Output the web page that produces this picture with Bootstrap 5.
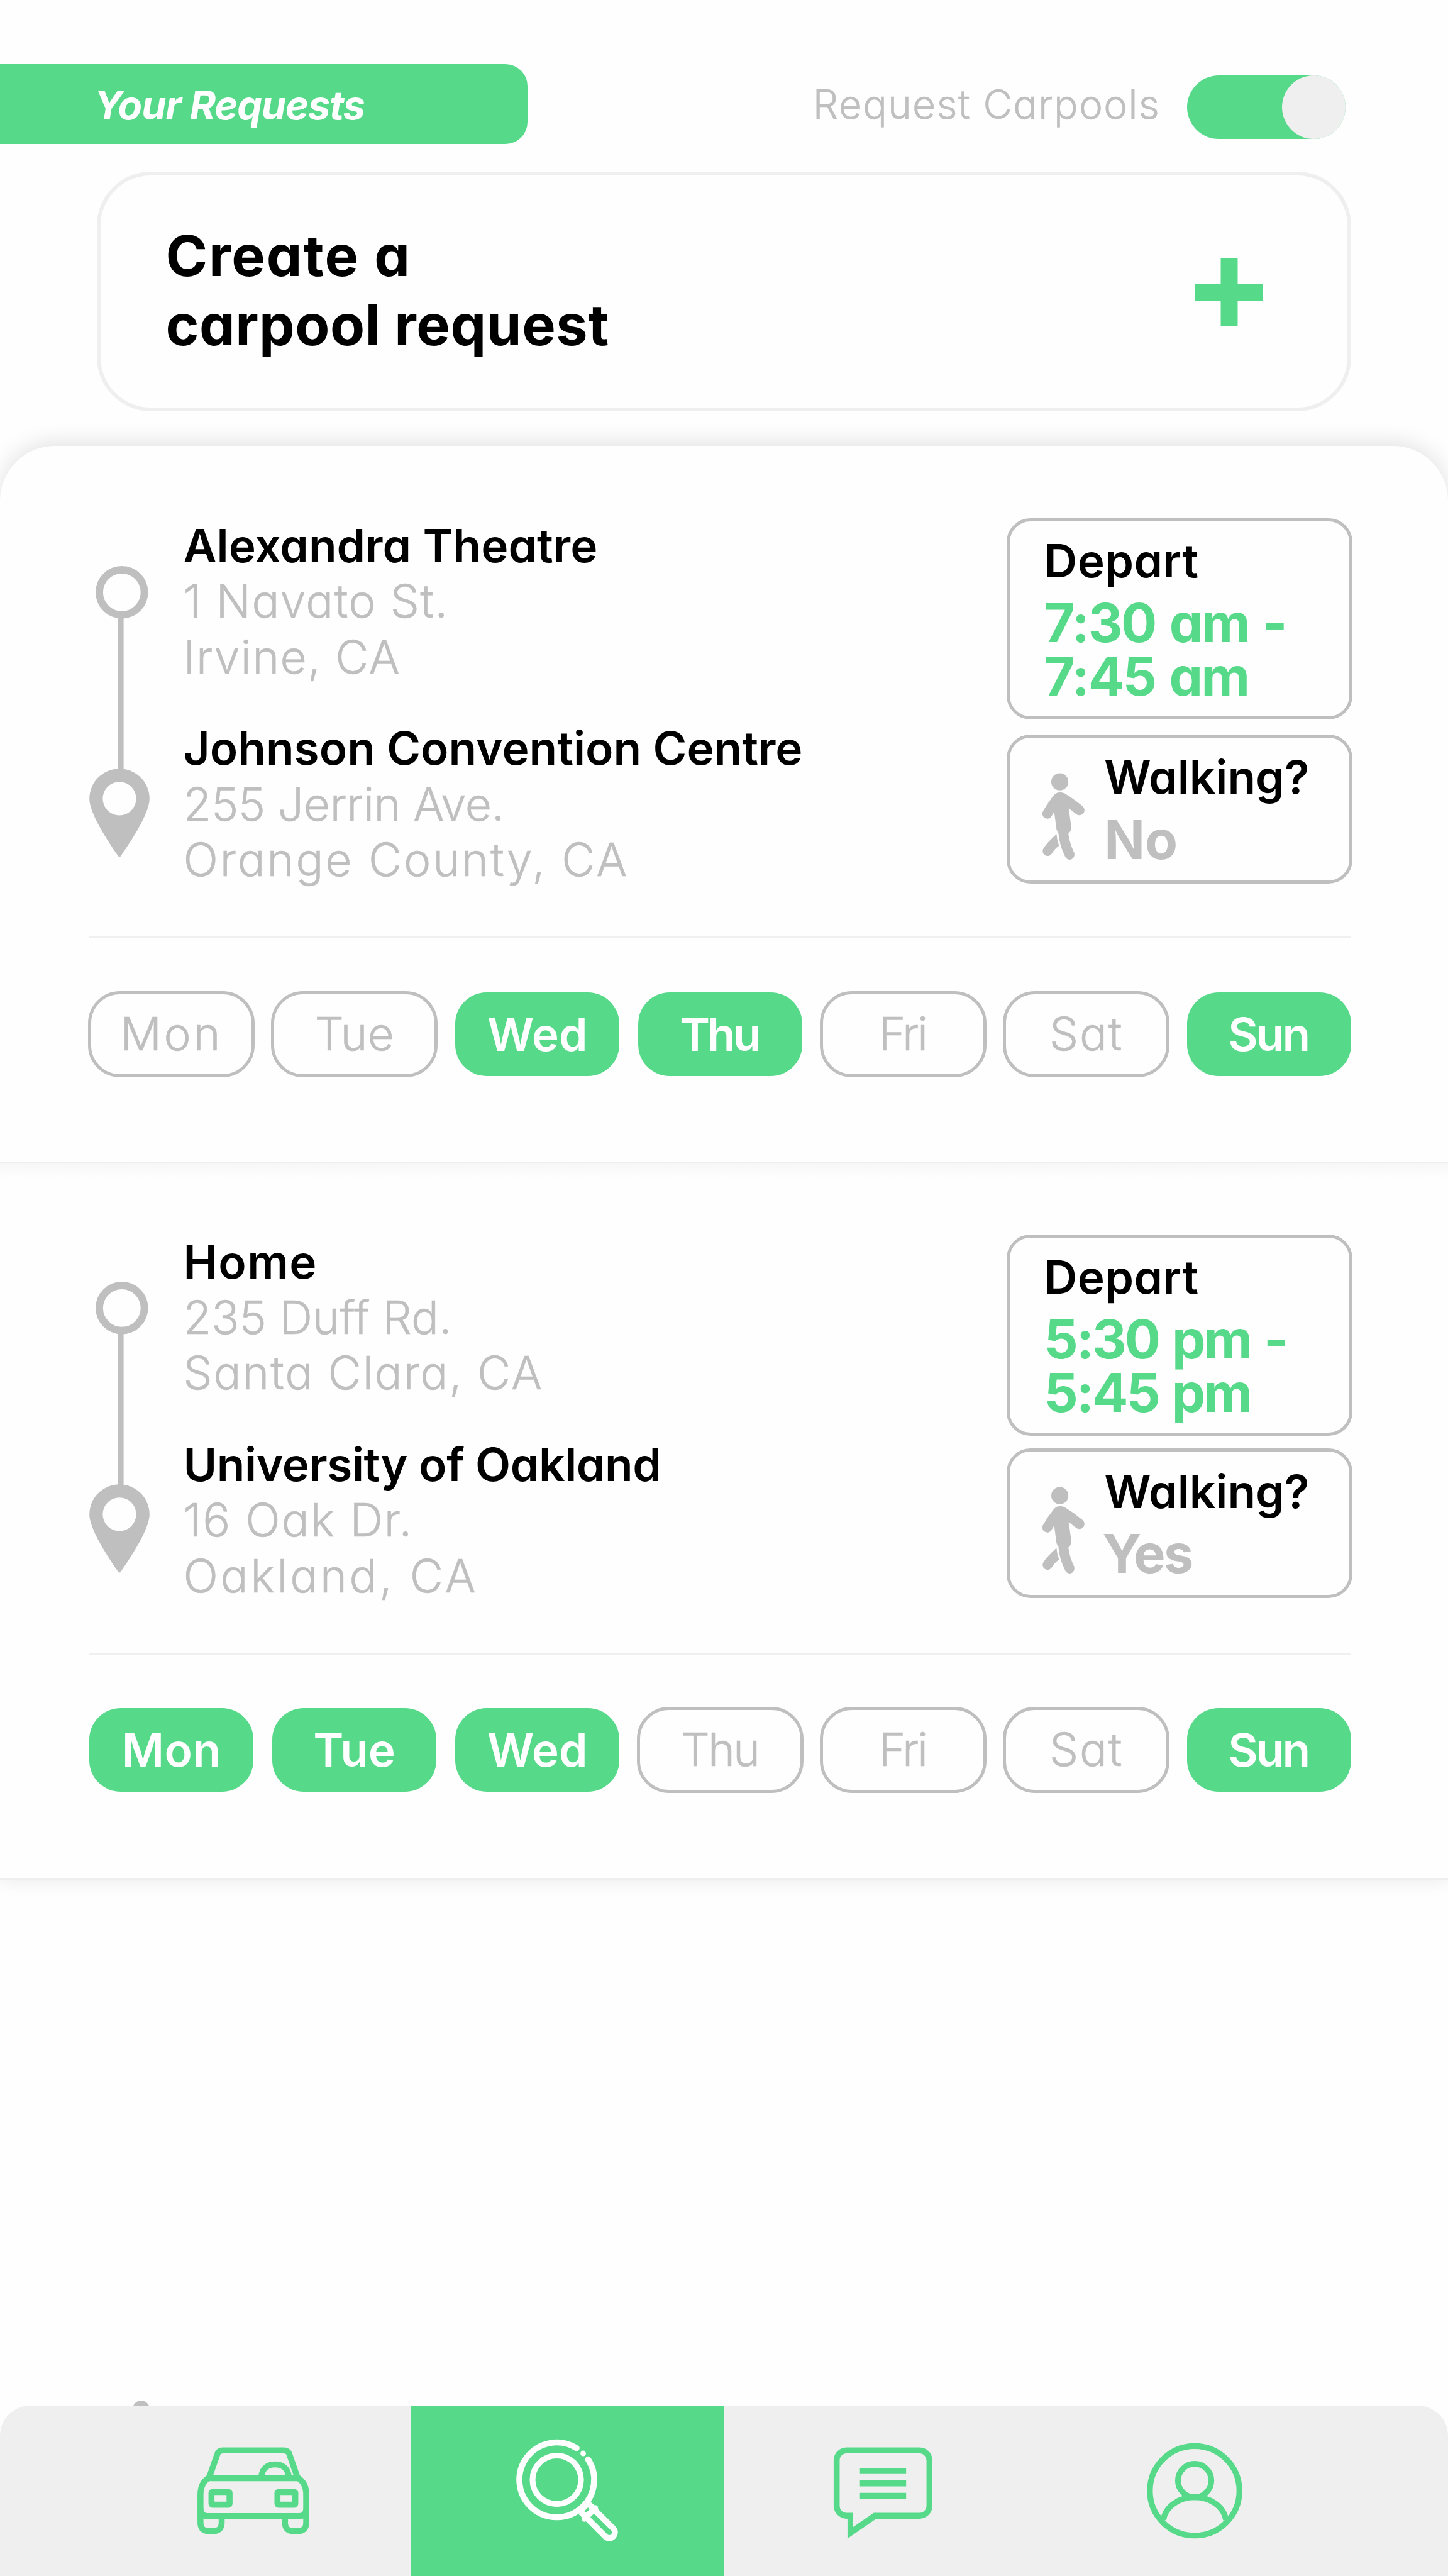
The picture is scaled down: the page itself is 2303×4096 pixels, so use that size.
<!DOCTYPE html>
<html lang="en">
<head>
<meta charset="utf-8">
<meta name="viewport" content="width=device-width, initial-scale=1">
<title>Your Requests</title>
<link rel="stylesheet" href="https://cdn.jsdelivr.net/npm/bootstrap@5.3.0/dist/css/bootstrap.min.css">
<style>
  :root { --green: #57d98a; --grey: #bfbfbf; --pale: #efefef; }
  body { background: #fefefe; color: #000; font-family: Inter, "Open Sans", sans-serif; font-feature-settings: "cv11"; }
  .screen { width: 2303px; height: 4096px; white-space: nowrap; }
  .c-green { color: var(--green); }
  .c-grey { color: var(--grey); }

  /* letter tracking */
  .trk-n6 { letter-spacing: -4px; text-indent: -4px; } .trk-n3 { letter-spacing: -3px; text-indent: -3px; }
  .trk-n1 { letter-spacing: -.4px; }
  .trk-h { letter-spacing: .5px; } .trk-1 { letter-spacing: 1.4px; } .trk-2 { letter-spacing: 1.9px; }
  .trk-3 { letter-spacing: 2.9px; } .trk-4 { letter-spacing: 3.7px; }

  .top-bar { margin-top: 101.6px; height: 125.6px; }
  .tab-title { width: 839px; padding: 4px 0 0 149.5px; line-height: 123.6px; font-size: 63px; font-weight: 700; font-style: italic; letter-spacing: -1.1px; color: #fff; background: var(--green); border-radius: 0 35px 35px 0; }
  .switch-group { margin: 18.6px 163px 0 0; }
  .switch-label { font-size: 64px; font-weight: 350; -webkit-text-stroke: .6px var(--grey); line-height: 91px; letter-spacing: 1.3px; margin-right: 43px; }
  .switch-track { width: 252px; height: 101px; border-radius: 51px; background: var(--green); }
  .switch-knob { width: 101px; height: 101px; background: var(--pale); }

  .create-box { margin: 46px 154px 0; height: 380.6px; border: 6px solid var(--pale); border-radius: 86px; padding: 0 133.6px 0 103.5px; }
  .create-text { font-size: 90px; font-weight: 700; line-height: 110px; margin-bottom: 3px; }
  .plus { margin-top: 3px; }

  .panel { background: #fefefe; border-bottom: 3px solid #eee; }
  .panel-first { margin-top: 55px; height: 1141px; padding-top: 115.2px; border-radius: 87px 87px 0 0; box-shadow: 0 -6px 34px rgba(0,0,0,.11); z-index: 2; }
  .panel-next { height: 1139px; padding-top: 112.8px; box-shadow: 0 4px 26px rgba(0,0,0,.07); z-index: 1; }
  .panel-first::after { content: ""; position: absolute; left: 0; right: 0; top: 100%; margin-top: 3px; height: 24px; background: linear-gradient(#f7f7f7, #fefefe); }
  .trip { height: 665px; padding: 0 152px 0 142px; }
  .route { width: 96px; height: 463px; margin-top: 75.7px; }
  .stops { margin: 0 0 0 53.5px; font-size: 73px; line-height: 88.45px; }
  .stop-name { font-weight: 600; }
  .stop-line { font-weight: 350; color: var(--grey); -webkit-text-stroke: .6px var(--grey); }
  .stop + .stop { margin-top: 56.8px; }
  .facts { width: 550.5px; }
  .fact { border: 5px solid var(--grey); border-radius: 38px; }
  .depart { height: 320.5px; padding: 21px 0 0 55px; }
  .walking { height: 237.6px; margin-top: 23.3px; padding-left: 49.6px; }
  .walking-tight { margin-top: 20.3px; }
  .walking svg { margin-top: 54px; width: 73.7px; height: 142.4px; }
  .walking-text { margin: 21.4px 0 0 27.5px; }
  .fact-label { font-size: 73px; font-weight: 600; line-height: 84px; }
  .fact-value { font-size: 85px; font-weight: 650; line-height: 84.6px; margin-top: 15.500px; }
  .time-range { letter-spacing: -2.4px; word-spacing: 4px; }
  .time-late { letter-spacing: -3.1px; }

  .rule { height: 3px; margin: 0 153.7px 0 141.5px; background: #f0f0f0; }
  .days { margin: 83.8px 0 0 140.2px; gap: 26px; }
  .day { width: 265px; height: 137px; border: 5px solid var(--grey); border-radius: 51px; font-size: 73px; font-weight: 350; -webkit-text-stroke: .6px var(--grey); line-height: 126.500px; color: var(--grey); text-align: center; }
  .day-on { width: 261px; height: 133px; margin: 2px; border: 0; border-radius: 50px; line-height: 133px; font-weight: 600; -webkit-text-stroke: 0; color: #fff; background: var(--green); }

  .peek { left: 211px; bottom: 252px; width: 27px; height: 27px; background: var(--grey); }
  .tabs { height: 271px; background: var(--pale); border-radius: 48px 48px 0 0; z-index: 3; }
  .tabs svg { display: block; }
  .tab-car { width: 652.8px; padding: 61.9px 0 0 309.4px; }
  .tab-search { width: 498.7px; padding: 35.4px 0 0 150.2px; background: var(--green); }
  .tab-chat { width: 575px; padding: 64.9px 0 0 168.9px; }
  .tab-user { padding: 57.5px 0 0 93.4px; }
</style>
</head>
<body>
<svg class="d-none" xmlns="http://www.w3.org/2000/svg">
  <symbol id="walker" viewBox="20 16 300 580">
    <g fill="#bfbfbf">
      <circle cx="144.500" cy="82" r="55.500"/>
      <path d="M104 172Q120 150 144 150Q160 150 174 156Q235 192 291 239A32 32 0 0 1 252 292L202 252L219 374Q220 400 200 418Q208 480 236 537A30 32 0 0 1 180 568Q142 495 135 410Q125 402 123 388L108 276L88 309A32 32 0 0 1 34 276Q64 220 104 172Z"/>
      <path d="M123 420Q126 460 140 496Q108 519 92 548A31 31 0 0 1 39 512Q58 480 123 420Z"/>
    </g>
  </symbol>
  <symbol id="route" viewBox="142 899.700 96 463">
    <path d="M192.300 978V1235" stroke="#bfbfbf" stroke-width="8.600"/>
    <circle cx="193.800" cy="941.500" r="35.800" fill="#fefefe" stroke="#bfbfbf" stroke-width="11.800"/>
    <path fill="#bfbfbf" fill-rule="evenodd" d="M190 1222A47.800 47.800 0 0 1 237.800 1270C237.800 1290 215 1328 192 1361Q190 1363.500 188 1361C165 1328 142.200 1290 142.200 1270A47.800 47.800 0 0 1 190 1222ZM190 1243A26.600 26.600 0 1 0 190 1296.200A26.600 26.600 0 1 0 190 1243Z"/>
  </symbol>
</svg>

<main class="screen position-relative overflow-hidden d-flex flex-column">
  <header class="top-bar d-flex justify-content-between align-items-start flex-shrink-0">
    <div class="tab-title">Your Requests</div>
    <div class="switch-group d-flex align-items-start">
      <span class="switch-label c-grey">Request Carpools</span>
      <div class="switch-track d-flex justify-content-end"><div class="switch-knob rounded-circle"></div></div>
    </div>
  </header>

  <section class="create-box d-flex justify-content-between align-items-center flex-shrink-0">
    <div class="create-text"><div class="trk-2">Create a</div><div class="trk-h">carpool request</div></div>
    <svg class="plus" width="108" height="108" viewBox="0 0 108 108"><path fill="#57d98a" d="M40.500 0h27v40.500H108v27H67.500V108h-27V67.500H0v-27h40.500z"/></svg>
  </section>

  <article class="panel panel-first position-relative flex-shrink-0">
    <div class="trip d-flex">
      <svg class="route"><use href="#route"/></svg>
      <div class="stops">
        <div class="stop">
          <div class="stop-name">Alexandra Theatre</div>
          <div class="stop-line trk-1">1 Navato St.</div>
          <div class="stop-line trk-1">Irvine, CA</div>
        </div>
        <div class="stop">
          <div class="stop-name">Johnson Convention Centre</div>
          <div class="stop-line trk-n1">255 Jerrin Ave.</div>
          <div class="stop-line trk-3">Orange County, CA</div>
        </div>
      </div>
      <div class="facts ms-auto">
        <div class="fact depart">
          <div class="fact-label trk-h">Depart</div>
          <div class="fact-value c-green time-range">7:30 am -<br>7:45 am</div>
        </div>
        <div class="fact walking d-flex align-items-start">
          <svg><use href="#walker"/></svg>
          <div class="walking-text">
            <div class="fact-label">Walking?</div>
            <div class="fact-value c-grey">No</div>
          </div>
        </div>
      </div>
    </div>
    <div class="rule"></div>
    <div class="days d-flex">
      <div class="day trk-4">Mon</div>
      <div class="day">Tue</div>
      <div class="day day-on">Wed</div>
      <div class="day day-on trk-n6">Thu</div>
      <div class="day trk-n3">Fri</div>
      <div class="day trk-2">Sat</div>
      <div class="day day-on trk-n3">Sun</div>
    </div>
  </article>

  <article class="panel panel-next position-relative flex-shrink-0">
    <div class="trip d-flex">
      <svg class="route"><use href="#route"/></svg>
      <div class="stops">
        <div class="stop">
          <div class="stop-name trk-1">Home</div>
          <div class="stop-line">235 Duff Rd.</div>
          <div class="stop-line trk-2">Santa Clara, CA</div>
        </div>
        <div class="stop">
          <div class="stop-name trk-n1">University of Oakland</div>
          <div class="stop-line trk-2">16 Oak Dr.</div>
          <div class="stop-line trk-4">Oakland, CA</div>
        </div>
      </div>
      <div class="facts ms-auto">
        <div class="fact depart">
          <div class="fact-label trk-h">Depart</div>
          <div class="fact-value c-green time-range time-late">5:30 pm -<br>5:45 pm</div>
        </div>
        <div class="fact walking walking-tight d-flex align-items-start">
          <svg><use href="#walker"/></svg>
          <div class="walking-text">
            <div class="fact-label">Walking?</div>
            <div class="fact-value c-grey trk-n3">Yes</div>
          </div>
        </div>
      </div>
    </div>
    <div class="rule"></div>
    <div class="days d-flex">
      <div class="day day-on trk-h">Mon</div>
      <div class="day day-on">Tue</div>
      <div class="day day-on">Wed</div>
      <div class="day trk-n3">Thu</div>
      <div class="day trk-n3">Fri</div>
      <div class="day trk-2">Sat</div>
      <div class="day day-on trk-n3">Sun</div>
    </div>
  </article>

  <div class="peek position-absolute rounded-circle"></div>

  <nav class="tabs position-relative d-flex mt-auto flex-shrink-0 overflow-hidden">
    <a class="tab-car" href="#" aria-label="Rides">
      <svg width="188" height="147.300" viewBox="0 0 255 200" fill="none" stroke="#57d98a" stroke-width="13">
        <path d="M32.500 70L49.500 21Q52 12.500 62 12.500H192.800Q202.800 12.500 205.300 21L222.300 70"/>
        <path d="M30 72.500H225"/>
        <path d="M33 70.500Q13.200 82 13.200 108V168Q13.200 186.500 30 186.500H42Q59 186.500 59 168V154.500"/>
        <path d="M221.800 70.500Q241.600 82 241.600 108V168Q241.600 186.500 224.800 186.500H212.800Q195.800 186.500 195.800 168V154.500"/>
        <path d="M13.200 138Q13.200 154.500 28 154.500H226.800Q241.600 154.500 241.600 138"/>
        <rect x="37" y="102.500" width="39" height="27.300" rx="2"/>
        <rect x="179.500" y="102.500" width="38.500" height="27.300" rx="2"/>
        <path d="M144.800 70C146 52 158 42.800 174.300 42.800S202.600 52 203.800 70"/>
      </svg>
    </a>
    <a class="tab-search" href="#" aria-label="Requests">
      <svg width="199" height="199" viewBox="0 0 810 810" fill="none" stroke="#fff" stroke-width="39" stroke-linecap="round">
        <path d="M464 133A242 242 0 1 0 502 514A242 242 0 0 0 539 206"/>
        <circle cx="336" cy="338" r="157" stroke-width="37"/>
        <circle cx="507" cy="167" r="18" fill="#fff" stroke="none"/>
        <path d="M477 560L557 482L600 522L520 602Z" fill="#fff" stroke="none"/>
        <path d="M538 517L549 530L526 551L514 541Z" fill="#57d98a" stroke="none"/>
        <path d="M584 521L517 590"/>
        <path d="M591 543L704 655A37 37 0 0 1 652 707L541 596"/>
      </svg>
    </a>
    <a class="tab-chat" href="#" aria-label="Messages">
      <svg width="169.400" height="147.300" viewBox="0 0 230 200" fill="#57d98a">
        <path fill-rule="evenodd" d="M36 2H193.500A28 28 0 0 1 221.300 30V128A28 28 0 0 1 193.500 156H99.700L37.900 199V156H36A28 28 0 0 1 8 128V30A28 28 0 0 1 36 2ZM36 15A15 15 0 0 0 21 30V128A15 15 0 0 0 36 143.300H49.900V174.300L94.700 143.300H194A15 15 0 0 0 208.500 128V30A15 15 0 0 0 194 15Z"/>
        <path d="M64.800 46.300h99.700v13.200H64.800zM64.800 73h99.700v13.200H64.800zM64.800 100h99.700v13.200H64.800z"/>
      </svg>
    </a>
    <a class="tab-user" href="#" aria-label="Profile">
      <svg width="162" height="154.700" viewBox="0 0 220 210" fill="none" stroke="#57d98a" stroke-width="12.500">
        <circle cx="108.700" cy="105.300" r="96.700"/>
        <circle cx="108.700" cy="83" r="36"/>
        <path d="M41 168C46 138 76 119 108.700 119S171.400 138 176.400 168"/>
      </svg>
    </a>
  </nav>
</main>
<script src="https://cdn.jsdelivr.net/npm/bootstrap@5.3.0/dist/js/bootstrap.bundle.min.js"></script>
</body>
</html>
